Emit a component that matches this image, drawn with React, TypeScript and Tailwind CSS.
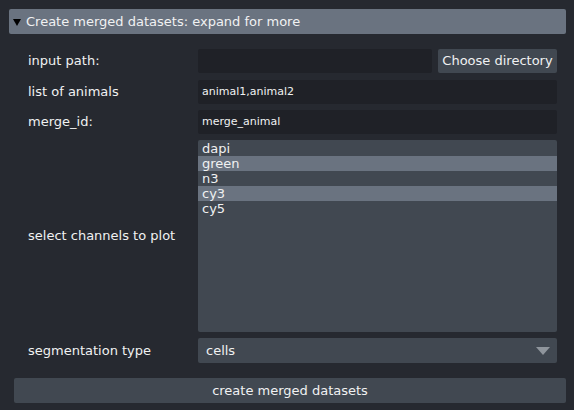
import React from 'react';

const channels = [
  { name: 'dapi', selected: false },
  { name: 'green', selected: true },
  { name: 'n3', selected: false },
  { name: 'cy3', selected: true },
  { name: 'cy5', selected: false },
];

const Row: React.FC<{ label: string; className?: string; children: React.ReactNode }> = ({ label, className, children }) => (
  <div className={`flex items-center ${className ?? ''}`}>
    <div className="w-[184px] pl-[14px] text-[13px] text-[#f0f1f2]">{label}</div>
    <div className="flex-1 flex">{children}</div>
  </div>
);

export default function App() {
  return (
    <div
      className="w-[574px] h-[410px] bg-[#262930] text-[#f0f1f2] overflow-hidden"
      style={{ fontFamily: '"DejaVu Sans", sans-serif' }}
    >
      <div className="pt-[9px] px-[8px] pr-[8px]">
        <div className="h-[25px] w-[557px] ml-[1px] rounded-[2px] bg-[#6a7380] flex items-center pl-[4px] text-[13px]">
          <svg width="8" height="7" viewBox="0 0 8 7" className="mr-[5px] mt-[2px]">
            <polygon points="0,0 8,0 4,7" fill="#000000" />
          </svg>
          Create merged datasets: expand for more
        </div>
      </div>

      <div className="pl-[14px] pr-[17px] mt-[15px] flex flex-col">
        <Row label="input path:">
          <div className="h-[24px] w-[234px] bg-[#1f2127] rounded-[2px]" />
          <div className="ml-[6px] h-[24px] w-[119px] bg-[#414851] rounded-[2px] flex items-center justify-center text-[13px]">
            Choose directory
          </div>
        </Row>
        <Row label="list of animals" className="mt-[7px]">
          <div className="h-[24px] w-[359px] bg-[#1f2127] rounded-[2px] flex items-center pl-[4px] text-[11px]">
            animal1,animal2
          </div>
        </Row>
        <Row label="merge_id:" className="mt-[6px]">
          <div className="h-[24px] w-[359px] bg-[#1f2127] rounded-[2px] flex items-center pl-[4px] text-[11px]">
            merge_animal
          </div>
        </Row>
        <Row label="select channels to plot" className="mt-[6px]">
          <div className="h-[192px] w-[359px] bg-[#414851] rounded-[2px] pt-[1px] flex flex-col">
            {channels.map((c) => (
              <div
                key={c.name}
                className={`h-[15px] pl-[4px] text-[13px] leading-[15px] ${c.selected ? 'bg-[#6a7380]' : ''}`}
              >
                {c.name}
              </div>
            ))}
          </div>
        </Row>
        <Row label="segmentation type" className="mt-[6px]">
          <div className="h-[25px] w-[359px] bg-[#414851] rounded-[2px] flex items-center justify-between pl-[8px] pr-[6px] text-[13px]">
            cells
            <svg width="16" height="10" viewBox="0 0 16 10">
              <polygon points="1,1 15,1 8,9" fill="#8f959c" />
            </svg>
          </div>
        </Row>
      </div>

      <div className="pl-[14px] mt-[15px]">
        <div className="h-[25px] w-[552px] bg-[#414851] rounded-[2px] flex items-center justify-center text-[13px]">
          create merged datasets
        </div>
      </div>
    </div>
  );
}
